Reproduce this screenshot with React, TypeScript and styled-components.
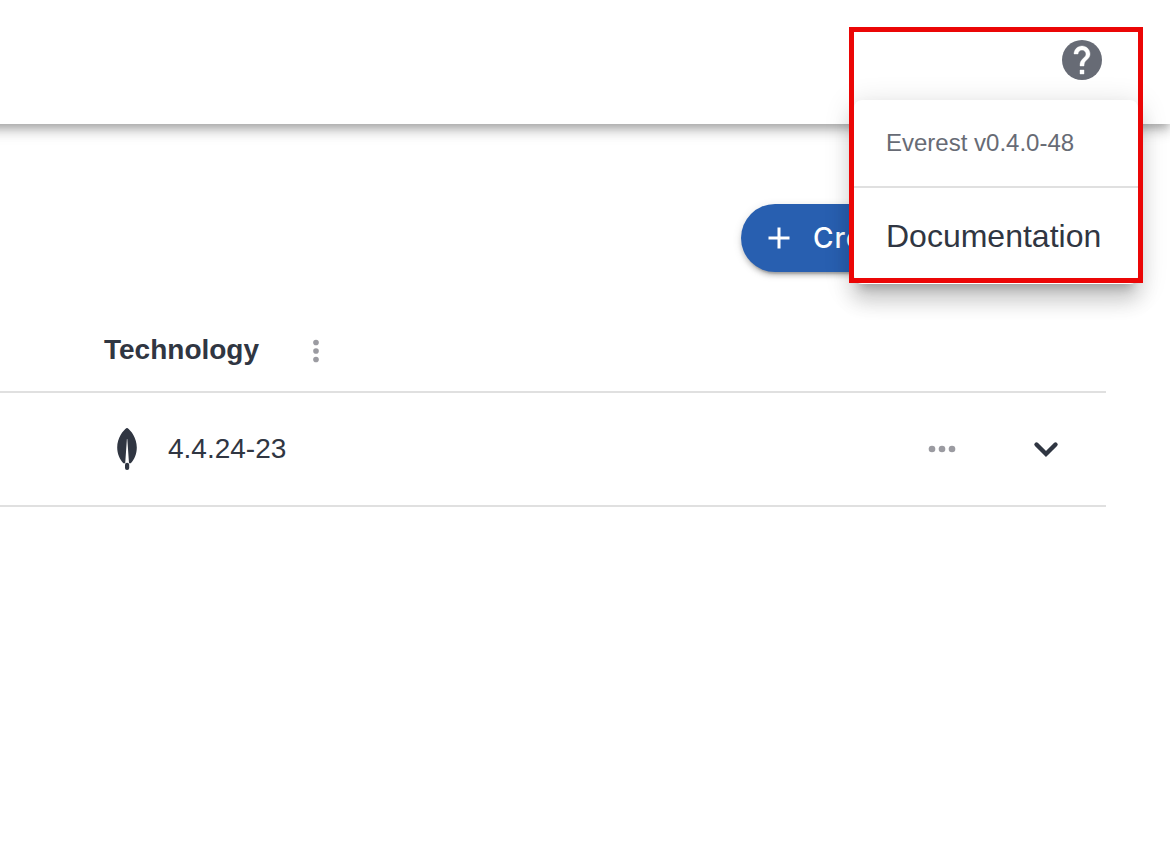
import React from "react";
import styled, { createGlobalStyle } from "styled-components";

const GlobalStyle = createGlobalStyle`
  *, *::before, *::after { box-sizing: border-box; }
  body {
    margin: 0;
    background: #fff;
    color: #303642;
    font-family: "Liberation Sans", Arial, sans-serif;
  }
`;

const Page = styled.div`
  position: relative;
  min-height: 100vh;
  overflow-x: hidden;
`;

const AppBar = styled.header`
  display: flex;
  align-items: center;
  justify-content: flex-end;
  height: 124px;
  margin-left: -24px;
  padding: 0 64px 4px 0;
  box-shadow:
    0 4px 8px -2px rgba(0, 0, 0, 0.2),
    0 8px 10px 0 rgba(0, 0, 0, 0.14),
    0 2px 20px 0 rgba(0, 0, 0, 0.12);
`;

const IconButton = styled.button<{ $tone: string }>`
  display: inline-flex;
  padding: 0;
  border: 0;
  background: none;
  color: ${(p) => p.$tone};
  cursor: pointer;
`;

const Content = styled.main`
  padding: 80px 64px 0 0;
`;

const Toolbar = styled.div`
  display: flex;
  justify-content: flex-end;
  margin-bottom: 34px;
`;

const CreateButton = styled.button`
  display: inline-flex;
  align-items: center;
  gap: 16px;
  width: 365px;
  height: 68px;
  padding: 0 20px;
  border: 0;
  border-radius: 34px;
  background: #285fb0;
  color: #fff;
  font: 500 28px/32px Inter, sans-serif;
  letter-spacing: 1px;
  white-space: nowrap;
  cursor: pointer;
  box-shadow:
    0 6px 2px -4px rgba(0, 0, 0, 0.2),
    0 4px 4px 0 rgba(0, 0, 0, 0.14),
    0 2px 10px 0 rgba(0, 0, 0, 0.12);
`;

const Table = styled.table`
  width: 100%;
  border-collapse: separate;
  border-spacing: 0;
  font-size: 28px;
  line-height: 32px;
`;

const HeadCell = styled.th`
  height: 87px;
  padding: 4px 0 0 104px;
  border-bottom: 2px solid #e0e0e0;
  text-align: left;
`;

const Cell = styled.td`
  height: 114px;
  padding: 0 40px 0 104px;
  border-bottom: 2px solid #e0e0e0;
`;

const HeadLabel = styled.div`
  display: flex;
  align-items: flex-start;
  gap: 40px;
`;

const Technology = styled.div`
  display: flex;
  align-items: center;
  gap: 18px;
`;

const Actions = styled.div`
  display: flex;
  align-items: center;
  justify-content: flex-end;
  gap: 64px;
`;

const Menu = styled.div`
  position: absolute;
  top: 100px;
  right: 32px;
  width: 284px;
  border-radius: 8px;
  background: #fff;
  box-shadow:
    0 10px 10px -6px rgba(0, 0, 0, 0.2),
    0 16px 20px 2px rgba(0, 0, 0, 0.14),
    0 6px 28px 4px rgba(0, 0, 0, 0.12);
`;

const Version = styled.div`
  padding: 28px 32px;
  border-bottom: 2px solid #e0e0e0;
  color: #676b75;
  font-size: 24px;
  line-height: 30px;
`;

const MenuLink = styled.a`
  display: block;
  padding: 28px 32px;
  color: #303642;
  font-size: 32px;
  line-height: 40px;
  text-decoration: none;
`;

const Highlight = styled.div`
  position: absolute;
  top: 27px;
  right: 27px;
  width: 294px;
  height: 256px;
  border: 5px solid #eb0606;
  pointer-events: none;
`;

const HelpIcon = () => (
  <svg width="48" height="48" viewBox="0 0 24 24" aria-hidden="true">
    <circle cx="12" cy="12" r="10" fill="currentColor" />
    <path
      fill="#fff"
      stroke="#fff"
      strokeWidth="0.2"
      d="M13 19h-2v-2h2v2zm2.070-7.750-.9.920C13.450 12.900 13 13.500 13 15h-2v-.5c0-1.100.450-2.100 1.170-2.830l1.240-1.260c.370-.360.590-.860.590-1.410 0-1.100-.9-2-2-2s-2 .9-2 2H8c0-2.210 1.790-4 4-4s4 1.790 4 4c0 .880-.360 1.680-.930 2.250z"
    />
  </svg>
);

const AddIcon = () => (
  <svg width="36" height="36" viewBox="0 0 24 24" fill="currentColor" aria-hidden="true">
    <path d="M19 13h-6v6h-2v-6H5v-2h6V5h2v6h6v2z" />
  </svg>
);

const DotsIcon = ({ size, vertical }: { size: number; vertical?: boolean }) => (
  <svg width={size} height={size} viewBox="0 0 24 24" fill="currentColor" aria-hidden="true">
    {[6, 12, 18].map((p) => (
      <circle key={p} cx={vertical ? 12 : p} cy={vertical ? p : 12} r="2" />
    ))}
  </svg>
);

const ChevronIcon = () => (
  <svg width="40" height="40" viewBox="0 0 40 40" fill="none" stroke="currentColor" strokeWidth="4.4" strokeLinecap="round" aria-hidden="true">
    <path d="M10.500 15.500 20 25l9.500-9.500" />
  </svg>
);

const LeafIcon = () => (
  <svg width="46" height="46" viewBox="0 0 46 46" fill="#303642" aria-hidden="true">
    <path d="M23.300 2c3.500 2.300 9.500 9.700 9.500 19.500 0 6-2.300 12-6 15.700h-1.800L23.300 13h-.4L21.200 37.200h-1.800c-3.700-3.700-6.200-9.700-6.200-15.700 0-9.800 6-17.200 9.500-19.500z" />
    <rect x="21" y="36.800" width="4.200" height="7.200" rx="2" />
  </svg>
);

export default function App() {
  return (
    <Page>
      <GlobalStyle />
      <AppBar>
        <IconButton $tone="#676b75" aria-label="Help" aria-expanded="true">
          <HelpIcon />
        </IconButton>
      </AppBar>
      <Content>
        <Toolbar>
          <CreateButton>
            <AddIcon />
            Create
          </CreateButton>
        </Toolbar>
        <Table>
          <thead>
            <tr>
              <HeadCell scope="col">
                <HeadLabel>
                  Technology
                  <IconButton $tone="#9b9ba1" aria-label="Column actions">
                    <DotsIcon size={34} vertical />
                  </IconButton>
                </HeadLabel>
              </HeadCell>
              <HeadCell as="td" />
            </tr>
          </thead>
          <tbody>
            <tr>
              <Cell>
                <Technology>
                  <LeafIcon />
                  4.4.24-23
                </Technology>
              </Cell>
              <Cell>
                <Actions>
                  <IconButton $tone="#9b9ba1" aria-label="Row actions">
                    <DotsIcon size={40} />
                  </IconButton>
                  <IconButton $tone="#303642" aria-label="Expand row">
                    <ChevronIcon />
                  </IconButton>
                </Actions>
              </Cell>
            </tr>
          </tbody>
        </Table>
      </Content>
      <Menu>
        <Version>Everest v0.4.0-48</Version>
        <MenuLink href="#documentation">Documentation</MenuLink>
      </Menu>
      <Highlight />
    </Page>
  );
}
